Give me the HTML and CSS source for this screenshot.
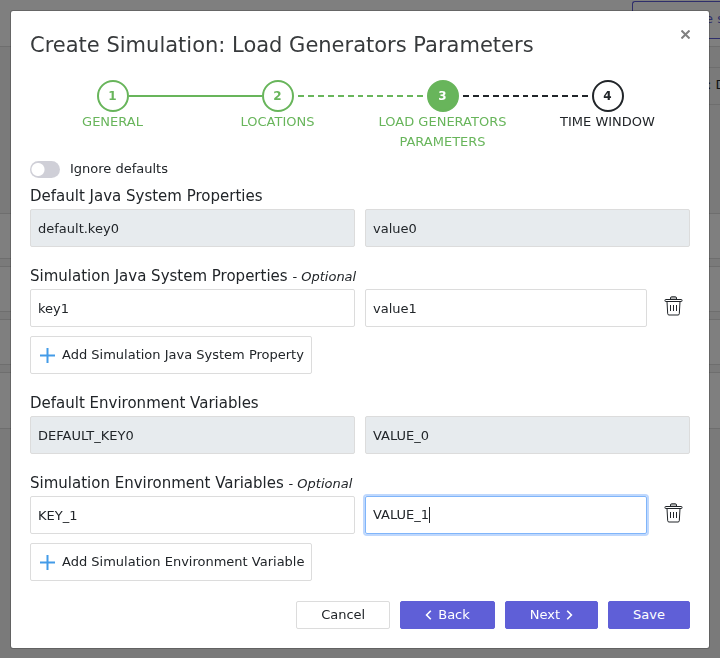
FILE: index.html
```html
<!DOCTYPE html>
<html lang="en">
<head>
<meta charset="utf-8">
<meta name="viewport" content="width=device-width, initial-scale=1">
<title>Create Simulation</title>
<link rel="stylesheet" href="styles.css">
</head>
<body>
<div class="page" aria-hidden="true">
  <div class="page-header"><span class="page-action">e s</span></div>
  <div class="page-toolbar"><span class="toolbar-panel">: D</span></div>
  <div class="page-list">
    <div class="page-row"></div>
    <div class="page-row"></div>
    <div class="page-row"></div>
    <div class="page-row page-row-last"></div>
  </div>
</div>
<div class="backdrop">
  <form class="modal" role="dialog" aria-labelledby="title">
    <header class="modal-header">
      <h1 id="title">Create Simulation: Load Generators Parameters</h1>
      <button class="close" type="button" aria-label="Close">
        <svg width="9" height="9" viewBox="0 0 9 9"><path d="M.5 .5l8 8M8.500 .5l-8 8" stroke="#808080" stroke-width="2" fill="none"/></svg>
      </button>
    </header>
    <ol class="steps">
      <li class="step done"><span class="circle">1</span><span class="step-name">GENERAL</span></li>
      <li class="step done"><span class="circle">2</span><span class="step-name">LOCATIONS</span></li>
      <li class="step current"><span class="circle">3</span><span class="step-name">LOAD GENERATORS PARAMETERS</span></li>
      <li class="step"><span class="circle">4</span><span class="step-name">TIME WINDOW</span></li>
    </ol>
    <label class="toggle"><input type="checkbox" role="switch">Ignore defaults</label>

    <section class="group">
      <h2>Default Java System Properties</h2>
      <div class="pair">
        <input type="text" value="default.key0" aria-label="Default property key" disabled>
        <input type="text" value="value0" aria-label="Default property value" disabled>
      </div>
    </section>
    <section class="group">
      <h2>Simulation Java System Properties <small>- <em>Optional</em></small></h2>
      <div class="pair">
        <input type="text" value="key1" aria-label="Property key">
        <div class="value">
          <input type="text" value="value1" aria-label="Property value">
          <button class="trash" type="button" aria-label="Remove property">
            <svg width="19" height="20" viewBox="0 0 19 20"><use href="#trash"/></svg>
          </button>
        </div>
      </div>
      <button class="add" type="button"><svg width="15" height="15" viewBox="0 0 15 15"><path d="M7.500 0v15M0 7.500h15"/></svg>Add Simulation Java System Property</button>
    </section>
    <section class="group">
      <h2>Default Environment Variables</h2>
      <div class="pair">
        <input type="text" value="DEFAULT_KEY0" aria-label="Default variable key" disabled>
        <input type="text" value="VALUE_0" aria-label="Default variable value" disabled>
      </div>
    </section>
    <section class="group">
      <h2>Simulation Environment Variables <small>- <em>Optional</em></small></h2>
      <div class="pair">
        <input type="text" value="KEY_1" aria-label="Variable key">
        <div class="value">
          <div class="active-field">
            <input type="text" value="VALUE_1" size="7" aria-label="Variable value">
            <span class="caret"></span>
          </div>
          <button class="trash" type="button" aria-label="Remove variable">
            <svg width="19" height="20" viewBox="0 0 19 20"><use href="#trash"/></svg>
          </button>
        </div>
      </div>
      <button class="add" type="button"><svg width="15" height="15" viewBox="0 0 15 15"><path d="M7.500 0v15M0 7.500h15"/></svg>Add Simulation Environment Variable</button>
    </section>
    <footer class="actions">
      <button class="btn cancel" type="button">Cancel</button>
      <button class="btn" type="button"><svg width="7" height="10" viewBox="0 0 7 10"><path d="M5.800 .8L1.600 5l4.200 4.200"/></svg>Back</button>
      <button class="btn" type="button">Next<svg width="7" height="10" viewBox="0 0 7 10"><path d="M1.200 .8L5.400 5 1.200 9.200"/></svg></button>
      <button class="btn" type="submit">Save</button>
    </footer>
  </form>
</div>
<svg class="symbols" width="0" height="0">
  <symbol id="trash" viewBox="0 0 19 20">
    <g fill="none" stroke="#212529">
      <path d="M6.500 3V2Q6.500 .8 7.700 .8h3.600Q12.500 .8 12.500 2v1" fill="#bbb"/>
      <rect x="1" y="3.500" width="17" height="2" rx=".6"/>
      <path d="M3 5.500l.7 12.300q.1 1.200 1.300 1.200h9q1.200 0 1.300-1.200L16 5.500"/>
      <path d="M6.500 9v6M9.500 9v6M12.500 9v6"/>
    </g>
  </symbol>
</svg>
</body>
</html>
```

FILE: styles.css
```css
* { box-sizing: border-box; }

body {
  margin: 0;
  font: 13px/20px "DejaVu Sans", sans-serif;
  color: #212529;
  background: #f5f5f5;
  overflow: hidden;
}

button, input { font: inherit; color: inherit; margin: 0; }
button { cursor: pointer; }
h1, h2 { margin: 0; font-weight: 400; }

/* Page behind the dialog */
.page { height: 100vh; overflow: hidden; white-space: nowrap; }
.page-header {
  display: flex;
  justify-content: flex-end;
  height: 47px;
  padding-top: 1px;
  background: #fff;
  border-bottom: 1px solid #dcdcdc;
}
.page-action {
  width: 88px;
  height: 38px;
  padding: 7px 0 7px 72px;
  border: 1px solid #5f5fd7;
  border-right: 0;
  border-radius: 3px 0 0 3px;
  color: #5f5fd7;
}
.page-toolbar {
  display: flex;
  justify-content: flex-end;
  height: 58px;
  margin-bottom: 108px;
  padding-top: 20px;
}
.toolbar-panel {
  width: 88px;
  padding: 7px 0 7px 75px;
  border: 1px solid #dcdcdc;
  border-width: 1px 0;
}
.page-list { display: grid; gap: 7px; }
.page-row {
  height: 46px;
  background: #fff;
  border: 1px solid #dcdcdc;
  border-width: 1px 0;
}
.page-row-last { height: 57px; }

/* Dialog */
.backdrop {
  position: fixed;
  inset: 0;
  padding: 10px;
  background: rgba(0, 0, 0, .5);
}
.modal {
  padding: 19px;
  background: #fff;
  background-clip: padding-box;
  border: 1px solid rgba(0, 0, 0, .2);
  border-radius: 3px;
}
.modal-header {
  display: flex;
  justify-content: space-between;
  align-items: flex-start;
}
h1 { font-size: 21px; line-height: 30px; color: #373a3c; }
.close { display: flex; padding: 0; border: 0; background: none; }

/* Progress */
.steps {
  display: grid;
  grid-template-columns: repeat(4, 1fr);
  margin: 20px 0 7px;
  padding: 0;
  list-style: none;
}
.step {
  display: grid;
  grid-template-columns: 1fr 32px 1fr;
  align-items: center;
  align-content: start;
}
.step::before, .step::after {
  content: "";
  grid-row: 1;
  height: 2px;
}
.step::before { grid-column: 1; margin-right: 4px; }
.step::after { grid-column: 3; margin-left: 4px; }
.circle {
  grid-area: 1 / 2;
  display: flex;
  align-items: center;
  justify-content: center;
  height: 32px;
  border: 2px solid #212529;
  border-radius: 50%;
  font-size: 12px;
  font-weight: 700;
}
.step-name { grid-column: 1 / -1; padding: 0 12px; text-align: center; }
.done, .current { color: #68b55b; }
.done .circle { border-color: #68b55b; }
.current .circle { border-color: #68b55b; background: #68b55b; color: #fff; }
.step:nth-child(1)::after, .step:nth-child(2)::before { background: #68b55b; margin: 0; }
.step:nth-child(2)::after {
  background: repeating-linear-gradient(90deg, #68b55b 0 6px, transparent 6px 10px);
}
.step:nth-child(3)::before {
  background: repeating-linear-gradient(-90deg, #68b55b 0 6px, transparent 6px 10px);
}
.step:nth-child(3)::after {
  background: repeating-linear-gradient(90deg, #212529 0 6px, transparent 6px 10px);
}
.step:nth-child(4)::before {
  background: repeating-linear-gradient(-90deg, #212529 0 6px, transparent 6px 10px);
}

/* Switch */
.toggle {
  display: flex;
  align-items: center;
  gap: 10px;
  width: fit-content;
  margin-bottom: 5px;
}
.toggle input {
  appearance: none;
  width: 30px;
  height: 17px;
  border-radius: 9px;
  background: radial-gradient(circle at 8px 50%, #fff 6px, #cfcfd7 7px);
}

/* Key and value fields */
.group { margin-bottom: 17px; }
h2 { font-size: 15px; line-height: 24px; margin-bottom: 1px; }
h2 small { font-size: 13px; line-height: 1; }
.pair { display: grid; grid-template-columns: 1fr 1fr; gap: 10px; }
.pair input {
  width: 100%;
  min-width: 0;
  height: 38px;
  padding: 0 7px;
  border: 1px solid #dcdcdc;
  border-radius: 2px;
  background: #fff;
}
.pair input:disabled { background: #e7ebee; color: #212529; }
.value { display: flex; align-items: center; }
.trash {
  display: flex;
  flex: none;
  justify-content: center;
  width: 43px;
  padding: 0 0 5px 10px;
  border: 0;
  background: none;
}
.active-field {
  display: flex;
  flex: 1;
  align-items: center;
  height: 38px;
  padding-left: 7px;
  border: 1px solid #80b5fa;
  border-radius: 2px;
  box-shadow: 0 0 0 2px #bfd8fd;
}
.pair .active-field input {
  width: auto;
  field-sizing: content;
  height: 20px;
  padding: 0;
  border: 0;
}
.caret { width: 1px; height: 16px; background: #212529; }
.add {
  display: flex;
  align-items: center;
  gap: 7px;
  height: 38px;
  margin-top: 9px;
  padding: 0 7px 0 9px;
  border: 1px solid #dcdcdc;
  border-radius: 2px;
  background: #fff;
}
.add path { stroke: #439be8; stroke-width: 2; }

/* Dialog actions */
.actions {
  display: flex;
  justify-content: flex-end;
  gap: 10px;
  padding-top: 3px;
}
.btn {
  display: flex;
  align-items: center;
  justify-content: center;
  gap: 6px;
  height: 28px;
  padding: 0 24px;
  border: 1px solid #5f5fd7;
  border-radius: 2px;
  background: #5f5fd7;
  color: #fff;
}
.btn path { fill: none; stroke: #fff; stroke-width: 1.6; }
.cancel { border-color: #dcdcdc; background: #fff; color: #212529; }
.symbols { position: absolute; }
```
